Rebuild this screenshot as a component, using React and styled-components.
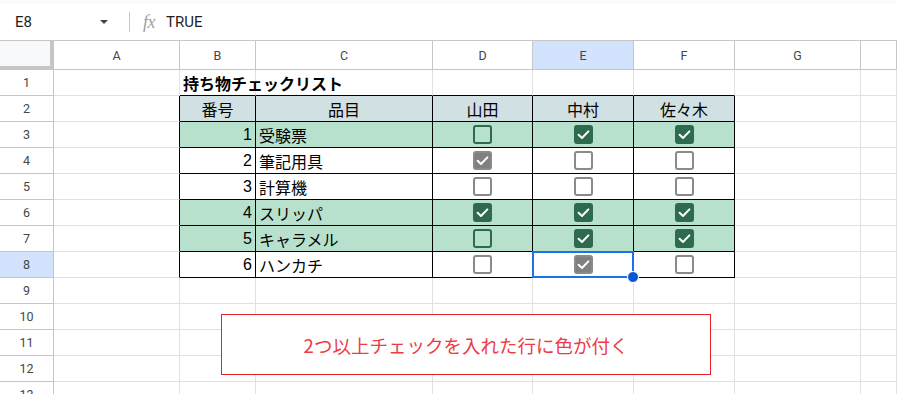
import React from 'react'
import styled, {createGlobalStyle} from 'styled-components'

const GlobalStyle = createGlobalStyle`
  html, body {
    margin: 0;
    padding: 0;
    background: #ffffff;
    overflow: hidden;
  }
  body {
    font-family: 'Liberation Sans', 'Noto Sans CJK JP', sans-serif;
  }
`

const COLS = ['A', 'B', 'C', 'D', 'E', 'F', 'G', '']
const WIDTHS = '54px 126px 76px 177px 100px 101px 101px 126px 1fr'

const items = [
  {no: 1, name: '受験票', checks: [false, true, true]},
  {no: 2, name: '筆記用具', checks: [true, false, false]},
  {no: 3, name: '計算機', checks: [false, false, false]},
  {no: 4, name: 'スリッパ', checks: [true, true, true]},
  {no: 5, name: 'キャラメル', checks: [false, true, true]},
  {no: 6, name: 'ハンカチ', checks: [false, true, false]},
]

const CheckBox = ({checked, tone}) => (
  <Box $checked={checked} $tone={tone}>
    {checked && (
      <svg width="15" height="15" viewBox="0 0 15 15">
        <polyline points="2.6,7.8 6,11 12.4,4.4" fill="none" stroke="#ffffff" strokeWidth="2" strokeLinecap="round" strokeLinejoin="round" />
      </svg>
    )}
  </Box>
)

const App = () => {
  const blank = (key, props = {}) => <Cell key={key} {...props} />

  const renderRow = (r) => {
    // r: sheet row number 1..13
    const cells = []
    cells.push(<RowHead key="h" $active={r === 8}>{r}</RowHead>)

    if (r === 1) {
      cells.push(blank('a'))
      cells.push(<Cell key="b" $bb><Title>持ち物チェックリスト</Title></Cell>)
      cells.push(blank('c', {$bb: true}))
      cells.push(blank('d', {$bb: true}))
      cells.push(blank('e', {$bb: true}))
      cells.push(blank('f', {$bb: true}))
    } else if (r === 2) {
      cells.push(blank('a', {$rb: true}))
      ;['番号', '品目', '山田', '中村', '佐々木'].forEach((t) => {
        cells.push(<Cell key={t} $rb $bb $bg="#d0e0e3" $align="center">{t}</Cell>)
      })
    } else if (r >= 3 && r <= 8) {
      const item = items[r - 3]
      const green = item.checks.filter(Boolean).length >= 2
      const bg = green ? '#b7e1cd' : '#ffffff'
      cells.push(blank('a', {$rb: true}))
      cells.push(<Cell key="no" $rb $bb $bg={bg} $align="flex-end">{item.no}</Cell>)
      cells.push(<Cell key="nm" $rb $bb $bg={bg}>{item.name}</Cell>)
      item.checks.forEach((c, i) => {
        const selected = r === 8 && i === 1
        cells.push(
          <Cell key={'c' + i} $rb $bb $bg={bg} $align="center">
            <CheckBox checked={c} tone={green ? 'green' : 'gray'} />
            {selected && <Selection><Handle /></Selection>}
          </Cell>
        )
      })
    } else {
      for (let i = 0; i < 6; i++) cells.push(blank('x' + i))
    }
    cells.push(blank('g'))
    cells.push(blank('h'))
    return cells
  }

  return (
    <Page>
      <GlobalStyle />
      <TopStrip />
      <FormulaBar>
        <NameBox>
          <CellRef>E8</CellRef>
          <Caret />
        </NameBox>
        <Divider />
        <Fx>fx</Fx>
        <FormulaText>TRUE</FormulaText>
      </FormulaBar>
      <Sheet>
        <Corner />
        {COLS.map((c, i) => (
          <ColHead key={i} $active={c === 'E'}>{c}</ColHead>
        ))}
        {Array.from({length: 13}, (_, i) => (
          <React.Fragment key={i}>{renderRow(i + 1)}</React.Fragment>
        ))}
        <Note>2つ以上チェックを入れた行に色が付く</Note>
      </Sheet>
    </Page>
  )
}

export default App

const Page = styled.div`
  width: 897px;
  height: 394px;
  overflow: hidden;
  position: relative;
  background: #ffffff;
`

const TopStrip = styled.div`
  height: 4px;
  background: #f9fbfd;
`

const FormulaBar = styled.div`
  height: 36px;
  display: flex;
  align-items: center;
  border-bottom: 1px solid #c7c7c7;
  font-family: 'Roboto', 'Liberation Sans', sans-serif;
  font-size: 15px;
  color: #1f1f1f;
`

const NameBox = styled.div`
  width: 122px;
  display: flex;
  align-items: center;
  justify-content: space-between;
  padding: 0 14px 0 15px;
  box-sizing: border-box;
`

const CellRef = styled.span`
  line-height: 20px;
`

const Caret = styled.span`
  width: 0;
  height: 0;
  border-left: 4px solid transparent;
  border-right: 4px solid transparent;
  border-top: 4px solid #444746;
`

const Divider = styled.div`
  width: 1px;
  height: 20px;
  background: #c7c7c7;
  margin: 0 13px 0 7px;
`

const Fx = styled.span`
  font-family: 'Liberation Serif', serif;
  font-style: italic;
  font-size: 18px;
  color: #a0a0a0;
  letter-spacing: -0.5px;
  margin-right: 11px;
`

const FormulaText = styled.span`
  line-height: 20px;
`

const Sheet = styled.div`
  position: relative;
  display: grid;
  grid-template-columns: ${WIDTHS};
  grid-template-rows: 29px repeat(13, 26px);
`

const Corner = styled.div`
  background: #f8f9fa;
  border-right: 4px solid #c4c7c5;
  border-bottom: 4px solid #c4c7c5;
  box-sizing: border-box;
`

const ColHead = styled.div`
  display: flex;
  align-items: center;
  justify-content: center;
  box-sizing: border-box;
  border-right: 1px solid #c4c7c5;
  border-bottom: 1px solid #c4c7c5;
  background: ${(p) => (p.$active ? '#d3e3fd' : '#ffffff')};
  font-family: 'Roboto', 'Liberation Sans', sans-serif;
  font-size: 12.5px;
  color: #444746;
`

const RowHead = styled.div`
  display: flex;
  align-items: center;
  justify-content: center;
  box-sizing: border-box;
  border-right: 1px solid #c4c7c5;
  border-bottom: 1px solid #c4c7c5;
  background: ${(p) => (p.$active ? '#d3e3fd' : '#ffffff')};
  font-family: 'Roboto', 'Liberation Sans', sans-serif;
  font-size: 12.5px;
  color: #444746;
`

const Cell = styled.div`
  position: relative;
  display: flex;
  align-items: center;
  justify-content: ${(p) => p.$align || 'flex-start'};
  padding: 0 3px;
  box-sizing: border-box;
  min-width: 0;
  background: ${(p) => p.$bg || '#ffffff'};
  border-right: 1px solid ${(p) => (p.$rb ? '#000000' : '#e1e1e1')};
  border-bottom: 1px solid ${(p) => (p.$bb ? '#000000' : '#e1e1e1')};
  font-family: 'Liberation Sans', 'Noto Sans CJK JP', sans-serif;
  font-size: 16px;
  color: #000000;
  white-space: nowrap;
`

const Title = styled.span`
  font-weight: 700;
  font-size: 16px;
  position: relative;
  z-index: 1;
`

const Box = styled.div`
  width: 19px;
  height: 19px;
  box-sizing: border-box;
  border-radius: 3px;
  display: flex;
  align-items: center;
  justify-content: center;
  background: ${(p) => (p.$checked ? (p.$tone === 'green' ? '#2e6b4e' : '#808080') : 'transparent')};
  border: 2px solid ${(p) => (p.$tone === 'green' ? '#2e6b4e' : '#8a8a8a')};
`

const Selection = styled.div`
  position: absolute;
  left: -1px;
  top: -1px;
  right: -1px;
  bottom: -1px;
  border: 2px solid #1a73e8;
  pointer-events: none;
  z-index: 2;
`

const Handle = styled.div`
  position: absolute;
  right: -7px;
  bottom: -7px;
  width: 10px;
  height: 10px;
  border-radius: 50%;
  background: #0b57d0;
  border: 1px solid #ffffff;
`

const Note = styled.div`
  position: absolute;
  left: 221px;
  top: 273px;
  width: 490px;
  height: 61px;
  box-sizing: border-box;
  border: 1px solid #e8202a;
  background: #ffffff;
  display: flex;
  align-items: center;
  justify-content: center;
  font-family: 'Noto Sans CJK JP', sans-serif;
  font-size: 18.5px;
  color: #ee3b45;
  z-index: 3;
`
